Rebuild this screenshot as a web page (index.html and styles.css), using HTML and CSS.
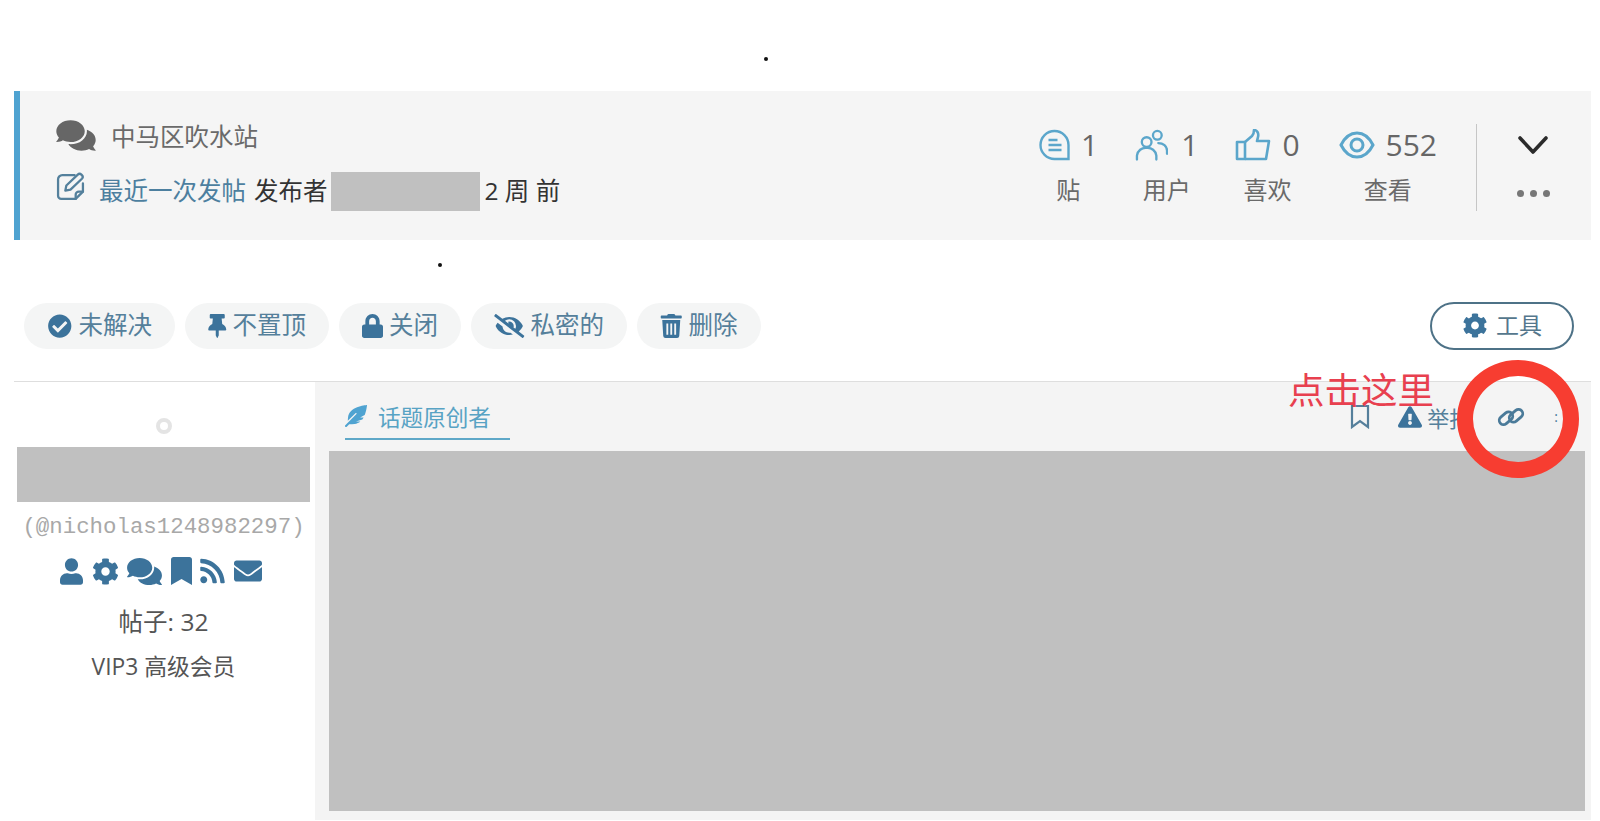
FILE: index.html
```html
<!DOCTYPE html>
<html lang="zh-CN">

<head>
    <meta charset="UTF-8">
    <meta name="viewport" content="width=device-width, initial-scale=1.0">
    <title>中马区吹水站</title>
    <link rel="stylesheet" href="styles.css">
</head>

<body>
    <svg class="sprite" xmlns="http://www.w3.org/2000/svg">
        <symbol id="i-comments" viewBox="0 0 576 512"><path d="M416 192c0-88.4-93.1-160-208-160S0 103.6 0 192c0 34.3 14.1 65.9 38 92-13.4 30.2-35.5 54.2-35.8 54.5-2.2 2.3-2.8 5.7-1.5 8.7S4.8 352 8 352c36.6 0 66.9-12.3 88.7-25 32.2 15.7 70.3 25 111.3 25 114.9 0 208-71.6 208-160zm122 220c23.9-26 38-57.7 38-92 0-66.9-53.5-124.2-129.3-148.1.9 6.6 1.3 13.3 1.3 20.1 0 105.9-107.7 192-240 192-10.8 0-21.3-.8-31.7-1.9C207.8 439.6 281.8 480 368 480c41 0 79.1-9.2 111.3-25 21.8 12.7 52.1 25 88.7 25 3.2 0 6.1-1.9 7.3-4.8 1.3-2.9.7-6.3-1.5-8.7-.3-.3-22.4-24.2-35.8-54.5z"/></symbol>
        <symbol id="i-cog" viewBox="0 0 512 512"><path d="M487.4 315.7l-42.6-24.6c4.3-23.2 4.3-47 0-70.2l42.6-24.6c4.9-2.8 7.1-8.6 5.5-14-11.1-35.6-30-67.8-54.7-94.6-3.8-4.1-10-5.1-14.8-2.3L380.8 110c-17.9-15.4-38.5-27.3-60.8-35.1V25.8c0-5.6-3.9-10.5-9.4-11.7-36.7-8.2-74.3-7.8-109.2 0-5.5 1.2-9.4 6.1-9.4 11.7V75c-22.2 7.9-42.8 19.8-60.8 35.1L88.7 85.5c-4.9-2.8-11-1.9-14.8 2.3-24.7 26.7-43.6 58.9-54.7 94.6-1.7 5.4.6 11.2 5.5 14L67.3 221c-4.3 23.2-4.3 47 0 70.2l-42.6 24.6c-4.9 2.8-7.1 8.6-5.5 14 11.1 35.6 30 67.8 54.7 94.6 3.8 4.1 10 5.1 14.8 2.3l42.6-24.6c17.9 15.4 38.5 27.3 60.8 35.1v49.2c0 5.6 3.9 10.5 9.4 11.7 36.7 8.2 74.3 7.8 109.2 0 5.5-1.2 9.4-6.1 9.4-11.7v-49.2c22.2-7.9 42.8-19.8 60.8-35.1l42.6 24.6c4.9 2.8 11 1.9 14.8-2.3 24.7-26.7 43.6-58.9 54.7-94.6 1.5-5.5-.7-11.3-5.6-14.1zM256 336c-44.1 0-80-35.9-80-80s35.9-80 80-80 80 35.9 80 80-35.9 80-80 80z"/></symbol>
        <symbol id="i-bookmark" viewBox="0 0 384 512"><path d="M0 512V48C0 21.49 21.49 0 48 0h288c26.51 0 48 21.49 48 48v464L192 400 0 512z"/></symbol>
    </svg>

    <span class="speck speck-top"></span>
    <span class="speck speck-mid"></span>

    <div class="page">
        <div class="topic-bar">
            <div class="topic-info">
                <div class="topic-title">
                    <svg class="icon-chat"><use href="#i-comments"/></svg>
                    <span>中马区吹水站</span>
                </div>
                <div class="topic-last">
                    <svg class="icon-edit line" viewBox="0 0 28 28" stroke="currentColor" stroke-width="2.200" stroke-linejoin="round" stroke-linecap="round">
                        <path d="M18 3H6a4 4 0 0 0-4 4v16a3 3 0 0 0 3 3h14l7-7V11"/>
                        <path d="M19 26v-4a3 3 0 0 1 3-3h4"/>
                        <path d="M9 18l1-5L21 2.500a2.500 2.500 0 0 1 3.500 0l.5.5a2.500 2.500 0 0 1 0 3.500L14 17z"/>
                    </svg>
                    <a class="last-link">最近一次发帖</a>
                    <span class="last-by">发布者</span>
                    <span class="redact-name"></span>
                    <span class="last-by">2 周 前</span>
                </div>
            </div>

            <div class="topic-stats">
                <div class="stat stat-posts">
                    <div class="stat-top">
                        <svg class="stat-icon line" viewBox="0 0 32 32" stroke="currentColor" stroke-width="2.400">
                            <path d="M16 2a14 14 0 1 0 0 28h14V16A14 14 0 0 0 16 2z"/>
                            <path d="M10 11h9M10 16h13M10 21h13"/>
                        </svg>
                        <span>1</span>
                    </div>
                    <div class="stat-label">贴</div>
                </div>
                <div class="stat stat-users">
                    <div class="stat-top">
                        <svg class="stat-icon line" viewBox="0 0 34 32" stroke="currentColor" stroke-width="2.400" stroke-linecap="round">
                            <circle cx="12" cy="13" r="5"/>
                            <circle cx="23" cy="6" r="4.500"/>
                            <path d="M2 31v-4a9 9 0 0 1 10-8 9 9 0 0 1 10 8v4"/>
                            <path d="M24 14c5 0 9 3 9 8v3"/>
                        </svg>
                        <span>1</span>
                    </div>
                    <div class="stat-label">用户</div>
                </div>
                <div class="stat">
                    <div class="stat-top">
                        <svg class="stat-icon stat-icon-wide line" viewBox="0 0 36 32" stroke="currentColor" stroke-width="2.600" stroke-linejoin="round">
                            <path d="M2 13h8v17H2z"/>
                            <path d="M10 13l7-6c2-2 2-4 2-6 3 0 5 3 4 7l-1 4h12l-3 18H10"/>
                        </svg>
                        <span>0</span>
                    </div>
                    <div class="stat-label">喜欢</div>
                </div>
                <div class="stat stat-views">
                    <div class="stat-top">
                        <svg class="stat-icon stat-icon-wide line" viewBox="0 0 36 30" stroke="currentColor" stroke-width="3">
                            <path d="M2 15C6 7 11 3 18 3s12 4 16 12c-4 8-9 12-16 12S6 23 2 15z"/>
                            <circle cx="18" cy="15" r="6"/>
                        </svg>
                        <span>552</span>
                    </div>
                    <div class="stat-label">查看</div>
                </div>
            </div>

            <div class="topic-toggle">
                <svg class="chevron line" viewBox="0 0 30 18" stroke="currentColor" stroke-width="3.600" stroke-linecap="round" stroke-linejoin="round">
                    <path d="M2 2l13 14L28 2"/>
                </svg>
                <div class="more-dots"><i></i><i></i><i></i></div>
            </div>
        </div>

        <div class="mod-row">
            <button class="mod-button">
                <svg class="mod-icon" viewBox="0 0 512 512"><path d="M504 256c0 136.967-111.033 248-248 248S8 392.967 8 256 119.033 8 256 8s248 111.033 248 248zM227.314 387.314l184-184c6.248-6.248 6.248-16.379 0-22.627l-22.627-22.627c-6.248-6.249-16.379-6.249-22.628 0L216 308.118l-70.059-70.059c-6.248-6.248-16.379-6.248-22.628 0l-22.627 22.627c-6.248 6.248-6.248 16.379 0 22.627l104 104c6.249 6.249 16.379 6.249 22.628.001z"/></svg>
                未解决
            </button>
            <button class="mod-button">
                <svg class="mod-icon mod-icon-pin" viewBox="0 0 384 512"><path d="M298.028 214.267L285.793 96H328c13.255 0 24-10.745 24-24V24c0-13.255-10.745-24-24-24H56C42.745 0 32 10.745 32 24v48c0 13.255 10.745 24 24 24h42.207L85.972 214.267C37.465 236.82 0 277.261 0 328c0 13.255 10.745 24 24 24h136v104.007c0 1.242.289 2.467.845 3.578l24 48c2.941 5.882 11.364 5.893 14.311 0l24-48a8.008 8.008 0 0 0 .845-3.578V352h136c13.255 0 24-10.745 24-24-.001-51.183-37.983-91.42-85.973-113.733z"/></svg>
                不置顶
            </button>
            <button class="mod-button">
                <svg class="mod-icon mod-icon-lock" viewBox="0 0 448 512"><path d="M400 224h-24v-72C376 68.2 307.800 0 224 0S72 68.2 72 152v72H48c-26.500 0-48 21.500-48 48v192c0 26.500 21.500 48 48 48h352c26.500 0 48-21.500 48-48V272c0-26.500-21.500-48-48-48zm-104 0H152v-72c0-39.700 32.300-72 72-72s72 32.300 72 72v72z"/></svg>
                关闭
            </button>
            <button class="mod-button">
                <svg class="mod-icon mod-icon-eye" viewBox="0 0 640 512"><path d="M320 400c-75.850 0-137.250-58.710-142.900-133.110L72.200 185.820c-13.790 17.300-26.480 35.590-36.720 55.590a32.350 32.350 0 0 0 0 29.190C89.710 376.410 197.070 448 320 448c26.910 0 52.870-4 77.890-10.460L346 397.390a144.130 144.130 0 0 1-26 2.610zm313.820 58.100l-110.550-85.440a331.250 331.250 0 0 0 81.250-102.070 32.350 32.350 0 0 0 0-29.190C550.290 135.590 442.930 64 320 64a308.150 308.150 0 0 0-147.320 37.700L45.460 3.370A16 16 0 0 0 23 6.180L3.370 31.450A16 16 0 0 0 6.180 53.900l588.360 454.730a16 16 0 0 0 22.460-2.810l19.640-25.270a16 16 0 0 0-2.820-22.450zm-183.720-142l-39.300-30.380A94.750 94.750 0 0 0 416 256a94.760 94.760 0 0 0-121.310-92.210A47.650 47.650 0 0 1 304 192a46.640 46.640 0 0 1-1.540 10l-73.610-56.890A142.310 142.310 0 0 1 320 112a143.920 143.920 0 0 1 144 144c0 21.630-5.290 41.790-13.900 60.110z"/></svg>
                私密的
            </button>
            <button class="mod-button">
                <svg class="mod-icon mod-icon-trash" viewBox="0 0 448 512"><path fill-rule="evenodd" d="M432 32H312l-9.400-18.700A24 24 0 0 0 281.100 0H166.800a23.720 23.720 0 0 0-21.400 13.300L136 32H16A16 16 0 0 0 0 48v32a16 16 0 0 0 16 16h416a16 16 0 0 0 16-16V48a16 16 0 0 0-16-16zM53.200 467a48 48 0 0 0 47.900 45h245.800a48 48 0 0 0 47.900-45L416 128H32zM120 200h40v240h-40zM204 200h40v240h-40zM288 200h40v240h-40z"/></svg>
                删除
            </button>

            <button class="tools-button">
                <svg class="tools-icon"><use href="#i-cog"/></svg>
                工具
            </button>
        </div>

        <div class="post">
            <aside class="post-user">
                <span class="status-ring"></span>
                <div class="redact-user"></div>
                <div class="user-handle">(@nicholas1248982297)</div>
                <div class="user-icons">
                    <svg class="ui-user" viewBox="0 0 448 512"><path d="M224 256c70.700 0 128-57.300 128-128S294.700 0 224 0 96 57.300 96 128s57.300 128 128 128zm89.600 32h-16.700c-22.200 10.200-46.900 16-72.900 16s-50.600-5.800-72.900-16h-16.700C60.200 288 0 348.200 0 422.400V464c0 26.500 21.500 48 48 48h352c26.500 0 48-21.500 48-48v-41.600c0-74.200-60.200-134.400-134.400-134.400z"/></svg>
                    <svg class="ui-cog"><use href="#i-cog"/></svg>
                    <svg class="ui-chat"><use href="#i-comments"/></svg>
                    <svg class="ui-mark"><use href="#i-bookmark"/></svg>
                    <svg class="ui-rss" viewBox="0 0 448 512"><path d="M128.081 415.959c0 35.369-28.672 64.041-64.041 64.041S0 451.328 0 415.959s28.672-64.041 64.041-64.041 64.040 28.673 64.040 64.041zm175.660 47.250c-8.354-154.600-132.185-278.587-286.950-286.950C7.656 175.765 0 183.105 0 192.253v48.069c0 8.415 6.490 15.472 14.887 16.018 111.832 7.284 201.473 96.702 208.772 208.772.547 8.397 7.604 14.887 16.018 14.887h48.069c9.149.001 16.489-7.655 15.995-16.790zm144.249.288C439.596 229.677 251.465 40.445 16.503 32.010 7.473 31.686 0 38.981 0 48.016v48.068c0 8.625 6.835 15.645 15.453 15.999 191.179 7.839 344.627 161.316 352.465 352.465.353 8.618 7.373 15.453 15.999 15.453h48.068c9.034-.001 16.329-7.474 16.005-16.504z"/></svg>
                    <svg class="ui-mail" viewBox="0 0 512 512"><path d="M502.300 190.800c3.900-3.100 9.700-.2 9.700 4.700V400c0 26.500-21.500 48-48 48H48c-26.500 0-48-21.500-48-48V195.600c0-5 5.700-7.800 9.700-4.700 22.400 17.400 52.100 39.500 154.100 113.600 21.100 15.400 56.700 47.800 92.200 47.600 35.700.3 72-32.800 92.300-47.600 102-74.100 131.600-96.300 154-113.700zM256 320c23.200.4 56.600-29.200 73.400-41.400 132.700-96.300 142.800-104.700 173.400-128.700 5.800-4.500 9.200-11.500 9.200-18.900v-19c0-26.500-21.500-48-48-48H48C21.500 64 0 85.500 0 112v19c0 7.400 3.400 14.300 9.200 18.900 30.600 23.900 40.700 32.400 173.400 128.700 16.800 12.200 50.200 41.800 73.400 41.400z"/></svg>
                </div>
                <div class="user-posts">帖子: 32</div>
                <div class="user-rank">VIP3 高级会员</div>
            </aside>

            <section class="post-body">
                <div class="post-head">
                    <div class="op-tab">
                        <svg class="op-icon" viewBox="0 0 512 512"><path d="M512 0C460.220 3.560 96.440 38.200 71.010 287.610c-3.090 26.660-4.840 53.440-5.990 80.240l178.870-178.690c6.250-6.250 16.400-6.250 22.650 0s6.250 16.380 0 22.630L7.040 471.030c-9.380 9.370-9.380 24.570 0 33.940 9.380 9.370 24.590 9.370 33.980 0l57.130-57.070c42.090-.14 84.150-2.530 125.960-7.360 53.480-5.440 97.020-26.470 132.580-56.540H255.740l146.790-48.880c11.250-14.890 21.370-30.710 30.450-47.120h-81.140l106.540-53.210C500.290 132.860 510.190 26.260 512 0z"/></svg>
                        话题原创者
                    </div>
                    <div class="post-actions">
                        <svg class="act-mark line" viewBox="0 0 20 25" stroke="currentColor" stroke-width="2.200"><path d="M2 2h16v21l-8-6-8 6z"/></svg>
                        <div class="act-report">
                            <svg class="act-warn" viewBox="0 0 576 512"><path d="M569.517 440.013C587.975 472.007 564.806 512 527.940 512H48.054c-36.937 0-59.999-40.055-41.577-71.987L246.423 23.985c18.467-32.009 64.720-31.951 83.154 0l239.940 416.028zM288 354c-25.405 0-46 20.595-46 46s20.595 46 46 46 46-20.595 46-46-20.595-46-46-46zm-43.673-165.346l7.418 136c.347 6.364 5.609 11.346 11.982 11.346h48.546c6.373 0 11.635-4.982 11.982-11.346l7.418-136c.375-6.874-5.098-12.654-11.982-12.654h-63.383c-6.884 0-12.356 5.780-11.981 12.654z"/></svg>
                            举报
                        </div>
                        <svg class="act-link line" viewBox="0 0 28 28" stroke="currentColor" stroke-width="2.800">
                            <rect x="1.500" y="11" width="15" height="8.500" rx="4.250" transform="rotate(-40 9 15.250)"/>
                            <rect x="11.500" y="8.500" width="15" height="8.500" rx="4.250" transform="rotate(-40 19 12.750)"/>
                        </svg>
                        <span class="act-more">:</span>
                    </div>
                </div>
                <div class="redact-post"></div>
            </section>
        </div>
    </div>

    <!-- red marks drawn over the screenshot -->
    <div class="mark-text">点击这里</div>
    <div class="mark-ring"></div>
</body>

</html>
```

FILE: styles.css
```css
* {
    box-sizing: border-box;
}

html,
body {
    height: 100%;
}

body {
    margin: 0;
    background-color: #fff;
    font-family: "Open Sans", "Noto Sans CJK SC", sans-serif;
    overflow: hidden;
}

svg {
    fill: currentColor;
    display: block;
    flex-shrink: 0;
}

svg.line {
    fill: none;
}

.sprite {
    display: none;
}

.page {
    margin: 0 9px 0 14px;
    padding-top: 91px;
}

.speck {
    position: absolute;
    width: 4px;
    height: 4px;
    border-radius: 50%;
    background-color: #111;
}

.speck-top {
    left: 764px;
    top: 57px;
}

.speck-mid {
    left: 438px;
    top: 263px;
}

/* topic bar */
.topic-bar {
    height: 149px;
    display: flex;
    align-items: center;
    background-color: #f5f5f5;
    border-left: 6px solid #4fa3d1;
    padding-left: 36px;
}

.topic-info {
    flex: 1;
    display: flex;
    flex-direction: column;
    gap: 16px;
    margin-top: -5px;
}

.topic-title {
    display: flex;
    align-items: center;
    gap: 15px;
    height: 36px;
    color: #6a6a6a;
    font-size: 24.500px;
}

.icon-chat {
    width: 40px;
    height: 35px;
    color: #666;
}

.topic-last {
    display: flex;
    align-items: center;
    height: 39px;
    font-size: 24.500px;
    color: #333;
}

.icon-edit {
    width: 29px;
    height: 29px;
    color: #54809c;
    margin: -6px 14px 0 0;
}

.last-link {
    color: #4d7f9f;
    margin-right: 8px;
}

.redact-name {
    width: 149px;
    height: 39px;
    background-color: #c0c0c0;
    margin: 5px 5px 0 3px;
}

.topic-stats {
    display: flex;
    gap: 37px;
    padding-right: 39px;
    margin-top: 3px;
    border-right: 1.500px solid #c6c6c6;
    height: 87px;
    align-items: center;
}

.stat {
    display: flex;
    flex-direction: column;
    align-items: center;
    gap: 10px;
}

.stat-top {
    display: flex;
    align-items: center;
    gap: 11px;
    font-size: 30px;
    line-height: 36px;
    color: #666;
}

.stat-posts .stat-top {
    gap: 10px;
}

.stat-users .stat-top {
    gap: 13px;
}

.stat-views {
    margin-left: 2px;
}

.stat-icon {
    width: 33px;
    height: 32px;
    color: #5ba6cb;
}

.stat-icon-wide {
    width: 36px;
}

.stat-label {
    font-size: 24px;
    line-height: 34px;
    color: #6a6a6a;
}

.topic-toggle {
    width: 114px;
    display: flex;
    flex-direction: column;
    align-items: center;
    gap: 36px;
    margin-top: 2px;
    padding-right: 2px;
    color: #2b2b2b;
}

.chevron {
    width: 30px;
    height: 18px;
}

.more-dots {
    display: flex;
    gap: 6px;
}

.more-dots i {
    width: 7px;
    height: 7px;
    border-radius: 50%;
    background-color: #777;
}

/* moderation buttons */
.mod-row {
    display: flex;
    align-items: center;
    gap: 10px;
    height: 142px;
    padding: 30px 17px 0 10px;
    border-bottom: 1px solid #dedede;
}

.mod-button {
    display: flex;
    align-items: center;
    justify-content: center;
    gap: 6px;
    height: 46px;
    padding: 0 23px;
    border: none;
    border-radius: 23px;
    background-color: #f4f5f5;
    color: #55809b;
    font-family: inherit;
    font-size: 24.500px;
    line-height: 1;
}

.mod-icon {
    width: 25.500px;
    height: 24px;
    color: #3c739b;
}

.mod-icon-pin {
    width: 18.500px;
}

.mod-icon-lock {
    width: 21px;
}

.mod-icon-eye {
    width: 30.500px;
}

.mod-icon-trash {
    width: 22.500px;
}

.tools-button {
    display: flex;
    align-items: center;
    justify-content: center;
    gap: 8px;
    margin-left: auto;
    width: 144px;
    height: 48px;
    border: 2px solid #4e7287;
    border-radius: 24px;
    background-color: #fff;
    color: #55778d;
    font-family: inherit;
    font-size: 23px;
    line-height: 1;
}

.tools-icon {
    width: 26px;
    height: 25px;
    color: #3c739b;
}

/* post */
.post {
    display: grid;
    grid-template-columns: 301px 1fr;
    height: 438px;
}

.post-user {
    display: flex;
    flex-direction: column;
    align-items: center;
    padding: 36px 5px 0 3px;
    color: #555;
}

.status-ring {
    width: 16px;
    height: 16px;
    border: 4px solid #e4e4e4;
    border-radius: 50%;
}

.redact-user {
    width: 293px;
    height: 55px;
    margin-top: 13px;
    background-color: #c0c0c0;
}

.user-handle {
    margin-top: 12px;
    font-family: "Liberation Mono", monospace;
    font-size: 22.400px;
    line-height: 26px;
    color: #a8a8a8;
    white-space: nowrap;
}

.user-icons {
    display: flex;
    align-items: center;
    gap: 8.500px;
    height: 30px;
    margin: 16px 0 0 -5px;
    color: #3c739b;
}

.ui-user {
    width: 23px;
    height: 27px;
}

.ui-cog {
    width: 27px;
    height: 27px;
}

.ui-chat {
    width: 35px;
    height: 31px;
}

.ui-mark {
    width: 21px;
    height: 28px;
}

.ui-rss {
    width: 25px;
    height: 28px;
}

.ui-mail {
    width: 28px;
    height: 28px;
}

.user-posts {
    margin-top: 19px;
    font-size: 24.500px;
    line-height: 34px;
}

.user-rank {
    margin-top: 11px;
    font-size: 22.800px;
    line-height: 34px;
}

.post-body {
    background-color: #f4f4f4;
    padding: 0 6px 9px 14px;
    display: flex;
    flex-direction: column;
}

.post-head {
    height: 69px;
    display: flex;
    justify-content: space-between;
    flex-shrink: 0;
}

.op-tab {
    display: flex;
    align-items: center;
    align-self: flex-start;
    gap: 11px;
    height: 58px;
    margin-left: 16px;
    padding: 12px 19px 0 0;
    border-bottom: 2px solid #5fa8c8;
    color: #58a3c4;
    font-size: 22.600px;
}

.op-icon {
    width: 22px;
    height: 22px;
    color: #4fa3d1;
}

.post-actions {
    display: flex;
    align-items: center;
    height: 70px;
    padding-bottom: 1px;
    color: #4a7a99;
}

.act-mark {
    width: 20px;
    height: 25px;
    color: #557f9b;
    margin-right: 28px;
}

.act-report {
    display: flex;
    align-items: center;
    gap: 5px;
    width: 73px;
    white-space: nowrap;
    font-size: 22px;
    color: #55809b;
}

.act-warn {
    width: 24px;
    height: 22px;
    color: #3c739b;
}

.act-link {
    width: 28px;
    height: 28px;
    margin-left: 26px;
    color: #4a7a99;
}

.act-more {
    margin: 0 27px 0 29px;
    font-size: 14px;
}

.redact-post {
    flex: 1;
    background-color: #c0c0c0;
}

/* annotation */
.mark-text {
    position: absolute;
    left: 1288px;
    top: 363px;
    font-family: "Noto Sans CJK SC", sans-serif;
    font-size: 36.500px;
    line-height: 52px;
    color: #e8404f;
}

.mark-ring {
    position: absolute;
    left: 1457px;
    top: 360px;
    width: 122px;
    height: 118px;
    border: 16px solid #f73d31;
    border-radius: 50%;
}
```
